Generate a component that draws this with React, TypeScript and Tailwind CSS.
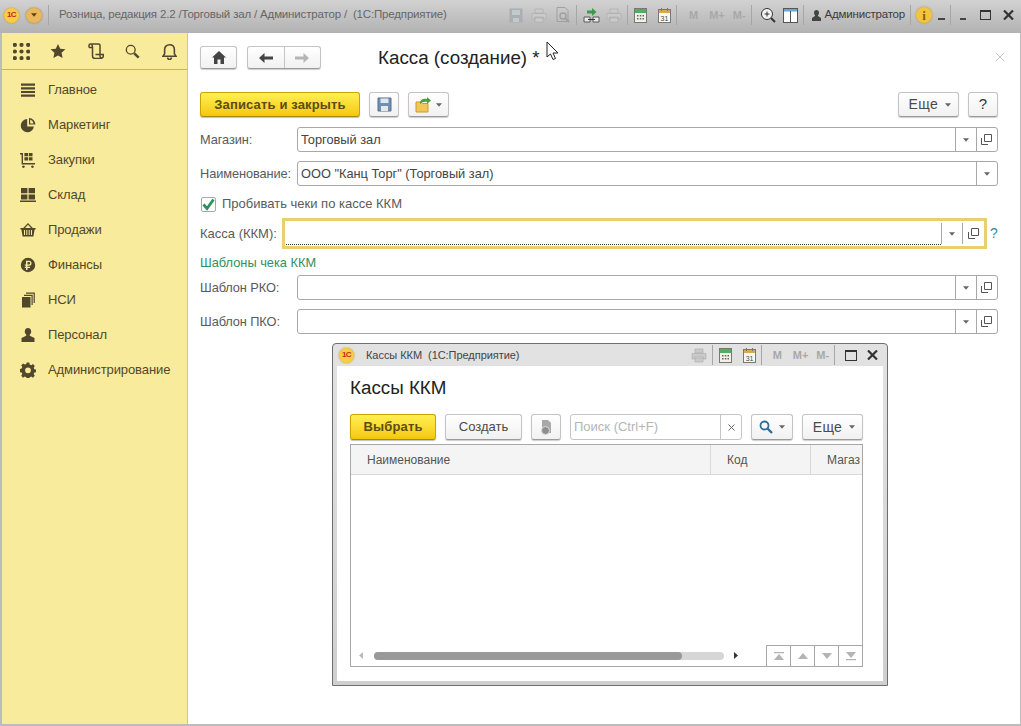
import React from 'react';

const menu = ['Главное', 'Маркетинг', 'Закупки', 'Склад', 'Продажи', 'Финансы', 'НСИ', 'Персонал', 'Администрирование'];

const Caret = ({ className = 'fill-[#666]' }: { className?: string }) => (
  <svg width="6" height="4" viewBox="0 0 7 4" className={className}>
    <path d="M0 0h7L3.5 4z" />
  </svg>
);

const Logo = () => (
  <span className="flex h-[15px] w-[15px] shrink-0 items-center justify-center rounded-full bg-[#f7cd45] shadow-[0_0_2px_#c98a20]">
    <span className="text-[8px] font-bold leading-none tracking-[-0.5px] text-[#c8281c]">1С</span>
  </span>
);

const MenuIcon = ({ i }: { i: number }) => {
  const c = 'fill-[#51482c]';
  return (
    <svg width="16" height="16" viewBox="0 0 16 16" className={c}>
      {i === 0 && <path d="M1 1.5h14v2.2H1zM1 5.2h14v2.2H1zM1 8.9h14v2.2H1zM1 12.6h14v2.2H1z" />}
      {i === 1 && <path d="M7.2 2a6.6 6.6 0 1 0 6.7 7.4H7.2zM9 1v6.6h6.4A6.6 6.6 0 0 0 9 1zm1.2 1.6a5 5 0 0 1 3.4 3.8h-3.4z" fillRule="evenodd" />}
      {i === 2 && <path d="M0 1h3v10h12v1.6H1.6V2.6H0zM4.4 1H8v3.3H4.4zm4.4 0h3.7v3.3H8.800zm-4.400 4.200H8v3.300H4.400zm4.400 0h3.700v3.300H8.800zM3.400 13.400a1.300 1.300 0 1 0 .1 0zm9 0a1.300 1.300 0 1 0 .1 0z" />}
      {i === 3 && <path d="M1 1h6.400v5.300H1zm7.600 0H15v5.300H8.600zM1 7.400h6.400v5H1zm7.600 0H15v5H8.600zM0 13.600h16V15H0z" />}
      {i === 4 && <path d="M8 1 3.200 6H.4v1.600h1L2.600 14.500h10.800l1.200-6.900h1V6h-2.800zm0 1.800L10.900 6H5.100zM4 8h1v5H4zm2.300 0h1v5h-1zm2.400 0h1v5h-1zM11 8h1v5h-1z" fillRule="evenodd" />}
      {i === 5 && <path d="M8 .8a7.200 7.200 0 1 0 0 14.400A7.200 7.200 0 0 0 8 .8zM6 3.800h3a2.500 2.500 0 0 1 0 5H7.500v1H10v1.300H7.500V13H6v-1.900H4.800V9.800H6v-1H4.800V7.400H6zm1.500 1.300v2.300H9a1.150 1.150 0 0 0 0-2.300z" fillRule="evenodd" />}
      {i === 6 && <path d="M2 5h8.500v10.500H2zM4 2.800h8.700V13h-1.200V4H4zM6 .6h8.800V11h-1.200V1.800H6z" />}
      {i === 7 && <path d="M8 1c-2 0-3.200 1.400-3.200 3.400 0 1.300.5 2.500 1.400 3.200v1.200L1.500 11v4h13v-4L9.800 8.800V7.600c.9-.7 1.400-1.900 1.400-3.200C11.200 2.400 10 1 8 1z" />}
      {i === 8 && <path d="M6.700.6h2.600l.4 2 1.500.6 1.700-1.100 1.900 1.900-1.100 1.700.6 1.500 2 .4v2.600l-2 .4-.6 1.500 1.100 1.700-1.900 1.900-1.700-1.100-1.500.6-.4 2H6.700l-.4-2-1.500-.6-1.700 1.100-1.900-1.900 1.100-1.700-.6-1.500-2-.4V7l2-.4.6-1.500-1.100-1.700 1.900-1.900 1.700 1.100 1.500-.6zM8 5.400a2.900 2.900 0 1 0 0 5.800 2.900 2.900 0 0 0 0-5.800z" fillRule="evenodd" />}
    </svg>
  );
};

const TopIcons = () => (
  <div className="flex h-[37px] items-center border-b border-[#c9b458] pl-[11px] text-[#51482c]">
    <svg width="17" height="17" viewBox="0 0 18 18" className="fill-[#51482c]">
      {[2, 9, 16].map((y) => [2, 9, 16].map((x) => <circle key={`${x}-${y}`} cx={x} cy={y} r="2.200" />))}
    </svg>
    <svg width="16" height="16" viewBox="0 0 18 18" className="ml-[20px] fill-[#51482c]">
      <path d="m9 1 2.500 5.400 5.900.7-4.400 4 1.200 5.800L9 14l-5.200 2.900L5 11.100l-4.400-4 5.900-.7z" />
    </svg>
    <svg width="16" height="16" viewBox="0 0 16 16" fill="none" className="ml-[22px] stroke-[#51482c] stroke-[1.500]">
      <path d="M1 4.500v-2A1.500 1.500 0 0 1 2.500 1h8A1.500 1.500 0 0 1 12 2.500V13c0 1.300 1 2.200 2 2 1-.2 1.300-1 1.300-2v-1.500H7.500" />
      <path d="M1 4.500h3.500M3.500 1.200c.8.800 1 1.800 1 3.300V13c0 1.500 1 2.500 2.500 2.500h7" />
    </svg>
    <svg width="15" height="15" viewBox="0 0 17 17" fill="none" className="ml-[21px] stroke-[#51482c]">
      <circle cx="6.500" cy="6.500" r="5" strokeWidth="1.500" />
      <path d="m10.500 10.500 5 5" strokeWidth="2.800" />
    </svg>
    <svg width="15" height="17" viewBox="0 0 16 18" fill="none" className="ml-[22px] stroke-[#51482c] stroke-[1.700]">
      <path d="M1 14h14l-1.800-2.500V7c0-3-2-5.200-5.200-5.200S2.800 4 2.800 7v4.500z" />
      <path d="M6 15.500a2 2 0 0 0 4 0" />
    </svg>
  </div>
);

const Sidebar = () => (
  <aside className="flex w-[186px] shrink-0 flex-col border-r border-[#d4c67c] bg-[#f9eb9c]">
    <TopIcons />
    <nav className="flex flex-col pt-[2px]">
      {menu.map((name, i) => (
        <div key={name} className="flex h-[35px] items-center pl-[18px] text-[13px] tracking-[-0.1px] text-[#51482c]">
          <MenuIcon i={i} />
          <span className="ml-[12px]">{name}</span>
        </div>
      ))}
    </nav>
  </aside>
);

const Sep = () => <span className="mx-[5px] h-[20px] w-px bg-[#a6a6a6]" />;

const Calc = ({ className = '' }: { className?: string }) => (
  <svg width="13" height="15" viewBox="0 0 13 15" className={className}>
    <rect x=".5" y=".5" width="12" height="14" fill="#f1f1e8" stroke="#777" />
    <rect x="1" y="1" width="11" height="4" fill="#4fae62" />
    <path d="M3 7h1.500v1.500H3zm2.800 0h1.500v1.500H5.800zm2.700 0H10v1.500H8.500zM3 10h1.500v1.500H3zm2.800 0h1.500v1.500H5.800zm2.700 0H10v1.500H8.500z" fill="#666" />
  </svg>
);

const Cal = ({ className = '' }: { className?: string }) => (
  <svg width="13" height="15" viewBox="0 0 13 15" className={className}>
    <rect x=".5" y="1.500" width="12" height="13" fill="#fafaf2" stroke="#777" />
    <rect x="1" y="2" width="11" height="3" fill="#d9a850" />
    <path d="M3 0h1v3H3zm6 0h1v3H9z" fill="#777" />
    <text x="6.500" y="12.500" textAnchor="middle" fontSize="7" fill="#444">31</text>
  </svg>
);

const Mem = ({ className = '' }: { className?: string }) => (
  <div className={`flex items-center text-[11px] font-bold text-[#a8a8a8] ${className}`}>
    <span>M</span>
    <span className="ml-[11px]">M+</span>
    <span className="ml-[8px]">M-</span>
  </div>
);

const PrintIcon = ({ className = '' }: { className?: string }) => (
  <svg width="16" height="15" viewBox="0 0 16 15" className={className}>
    <path d="M4 1h8v4H4zM1 5.500h14V11h-2.500V9h-9v2H1zM4 10h8v4H4z" fill="#cacaca" stroke="#aaa" strokeWidth=".6" />
  </svg>
);

const TitleBar = () => (
  <header className="flex h-[33px] shrink-0 items-center bg-gradient-to-b from-[#d2d2d2] to-[#b2b2b2] pb-[3px] pl-[4px] text-[12px]">
    <Logo />
    <span className="ml-[7px] flex h-[15px] w-[16px] items-center justify-center rounded-full bg-[#e9b75c] shadow-[0_0_2px_#9a7128]">
      <Caret className="fill-[#5b4310]" />
    </span>
    <span className="ml-[6px] h-[20px] w-px bg-[#a6a6a6]" />
    <span className="ml-[10px] w-[450px] whitespace-nowrap text-[11.500px] tracking-[-0.17px] text-[#666]">Розница, редакция 2.2 /Торговый зал / Администратор /&nbsp; (1С:Предприятие)</span>
    <div className="flex items-center">
      <svg width="14" height="15" viewBox="0 0 14 15"><path d="M.5.5h13v14H.5z" fill="#a9afb4" /><path d="M3 2h8v5H3zM4 10h6v4H4z" fill="#c4c9cc" /></svg>
      <PrintIcon className="ml-[8px]" />
      <svg width="15" height="16" viewBox="0 0 15 16" fill="none" className="ml-[9px] stroke-[#a0a0a0]"><path d="M1 .5h8l3 3v11H1z" /><circle cx="7" cy="9" r="3" strokeWidth="1.500" /><path d="m9 11 4 4" strokeWidth="2" /></svg>
      <Sep />
      <svg width="17" height="16" viewBox="0 0 17 16" className="ml-px"><path d="M4 3.500h5V1l4.500 4L9 9V6.500H4z" fill="#3f9a48" /><path d="M1 10h6v5H1zm9 0h6v5h-6z" fill="#e8e8e0" stroke="#5a5a5a" /><path d="M5 12.500h7" stroke="#333" /></svg>
      <PrintIcon className="ml-[6px]" />
      <Sep />
      <Calc className="ml-px" />
      <Cal className="ml-[11px]" />
      <Sep />
      <Mem className="ml-[7px]" />
      <Sep />
      <svg width="16" height="16" viewBox="0 0 16 16" fill="none" className="ml-[3px] stroke-[#333]"><circle cx="7" cy="7" r="5.500" fill="#f4f4f4" /><path d="M4.500 7h5M7 4.500v5" /><path d="m11 11 4 4" strokeWidth="2" /></svg>
      <svg width="15" height="15" viewBox="0 0 15 15" className="ml-[7px]"><rect x=".5" y=".5" width="14" height="14" fill="#fff" stroke="#555" /><rect x="1" y="1" width="13" height="2.500" fill="#67a9d8" /><path d="M7.500 3v11" stroke="#555" /></svg>
      <Sep />
      <svg width="9" height="11" viewBox="0 0 9 11" className="ml-[3px] fill-[#444]"><path d="M4.500 0C3 0 2 1.100 2 2.700c0 1 .4 1.900 1 2.400v1L0 8v3h9V8L6 6.100v-1c.6-.5 1-1.400 1-2.400C7 1.100 6 0 4.500 0z" /></svg>
      <span className="ml-[4px] whitespace-nowrap text-[11.500px] tracking-[-0.2px] text-[#3a3a3a]">Администратор</span>
    </div>
    <span className="ml-[5px] h-[20px] w-px bg-[#a6a6a6]" />
    <span className="ml-[5px] flex h-[16px] w-[16px] items-center justify-center rounded-full bg-[#f1c53e] font-['Liberation_Serif',serif] text-[13px] font-bold leading-none text-[#8a5a10] shadow-[0_0_2px_#b78a2a]">i</span>
    <span className="ml-[6px] mt-[8px] h-[2px] w-[7px] bg-[#444]" />
    <span className="ml-[5px] h-[20px] w-px bg-[#a6a6a6]" />
    <span className="ml-[9px] mt-[8px] h-[2px] w-[6px] bg-[#444]" />
    <span className="ml-[14px] h-[10px] w-[11px] border border-t-2 border-[#333]" />
    <svg width="11" height="10" viewBox="0 0 11 10" className="ml-[12px] stroke-[#333] stroke-[2.200]"><path d="m1 .5 9 9m0-9-9 9" /></svg>
  </header>
);

const Btn = ({ children, className = '' }: { children?: React.ReactNode; className?: string }) => (
  <button className={`flex items-center justify-center rounded-[3px] border border-[#c4c4c4] border-b-[#9a9a9a] bg-gradient-to-b from-white to-[#f1f1f1] text-[13px] text-[#4a4a4a] shadow-[0_1px_1px_rgba(0,0,0,0.2)] ${className}`}>
    {children}
  </button>
);

const YellowBtn = ({ children, className = '' }: { children: React.ReactNode; className?: string }) => (
  <button className={`flex items-center justify-center rounded-[3px] border border-[#c9a400] border-b-[#a88a10] bg-gradient-to-b from-[#fff04f] to-[#f5c800] text-[13px] font-bold tracking-[0.15px] text-[#5b4d14] shadow-[0_1px_1px_rgba(0,0,0,0.25)] ${className}`}>
    {children}
  </button>
);

const MoreBtn = ({ className = '' }: { className?: string }) => (
  <Btn className={`h-[25px] w-[61px] gap-[7px] pl-[3px] text-[14px] tracking-[0.3px] ${className}`}>Еще <Caret /></Btn>
);

const OpenIcon = () => (
  <svg width="11" height="11" viewBox="0 0 11 11" fill="none" className="stroke-[#555]">
    <path d="M3.500.5h7v7h-7z" />
    <path d="M.5 4v6.500H7" />
  </svg>
);

const FieldEnd = ({ open = true, h = 'h-full' }: { open?: boolean; h?: string }) => (
  <>
    <span className={`flex w-[21px] shrink-0 items-center justify-center border-l border-[#a8a8a8] ${h}`}>
      <Caret className="fill-[#666]" />
    </span>
    {open && (
      <span className={`flex w-[21px] shrink-0 items-center justify-center border-l border-[#a8a8a8] ${h}`}>
        <OpenIcon />
      </span>
    )}
  </>
);

const Field = ({ label, value, open = true }: { label: string; value?: string; open?: boolean }) => (
  <div className="flex h-[25px] items-center text-[12.800px] text-[#5a5a5a]">
    <span className="w-[97px] shrink-0 whitespace-nowrap tracking-[-0.1px]">{label}</span>
    <div className="flex h-full flex-1 items-center rounded-[3px] border border-[#a8a8a8] bg-white">
      <span className="flex-1 pl-[3px] text-[#444]">{value}</span>
      <FieldEnd open={open} />
    </div>
  </div>
);

const FormArea = () => (
  <main className="flex flex-1 flex-col bg-white pl-[12px] pr-[22px] pt-[13px]">
    <div className="flex h-[23px] items-center">
      <Btn className="h-[23px] w-[37px]">
        <svg width="14" height="13" viewBox="0 0 14 13" className="fill-[#444]"><path d="M7 0 0 6.500h2V13h3.500V8.500h3V13H12V6.500h2z" /></svg>
      </Btn>
      <div className="ml-[10px] flex h-[23px] w-[74px] rounded-[3px] border border-[#c4c4c4] border-b-[#9a9a9a] bg-gradient-to-b from-white to-[#f1f1f1] shadow-[0_1px_1px_rgba(0,0,0,0.2)]">
        <span className="flex flex-1 items-center justify-center border-r border-[#c4c4c4]">
          <svg width="14" height="10" viewBox="0 0 14 10" className="fill-[#444]"><path d="M5.500 0v3.500H14v3H5.500V10L0 5z" /></svg>
        </span>
        <span className="flex flex-1 items-center justify-center">
          <svg width="14" height="10" viewBox="0 0 14 10" className="fill-[#b5b5b5]"><path d="M8.500 0v3.500H0v3h8.500V10L14 5z" /></svg>
        </span>
      </div>
      <h1 className="ml-[57px] mt-[2px] whitespace-nowrap text-[18.800px] text-[#222]">Касса (создание) *</h1>
      <svg width="12" height="12" viewBox="0 0 12 12" className="ml-auto mr-[-8px] mt-[-2px] stroke-[#c4c4c4]"><path d="m2 2 8 8m0-8-8 8" /></svg>
    </div>

    <div className="mt-[23px] flex h-[25px] items-center">
      <YellowBtn className="h-[25px] w-[160px]">Записать и закрыть</YellowBtn>
      <Btn className="ml-[9px] h-[25px] w-[30px]">
        <svg width="15" height="15" viewBox="0 0 15 15"><path d="M1 1h13v13H1z" fill="#6f8fb5" stroke="#566f8e" /><path d="M3.500 1.500h8V6h-8z" fill="#dfe8f2" /><path d="M4 9h7v5H4z" fill="#e8e8e8" /></svg>
      </Btn>
      <Btn className="ml-[9px] h-[25px] w-[41px] gap-[4px]">
        <svg width="17" height="16" viewBox="0 0 17 16"><path d="M1 5h5l1.500 1.500H13V15H1z" fill="#f2c75a" stroke="#c99b2d" /><path d="M5 5c1-3 4-4 7-3V0l4 3.500L12 7V4.800C9 4.300 7 5 5 7z" fill="#4f9d3f" /></svg>
        <Caret />
      </Btn>
      <MoreBtn className="ml-auto" />
      <Btn className="ml-[9px] h-[25px] w-[30px] text-[15px] text-[#333]">?</Btn>
    </div>

    <div className="mt-[10px]"><Field label="Магазин:" value="Торговый зал" /></div>
    <div className="mt-[9px]"><Field label="Наименование:" value={'ООО "Канц Торг" (Торговый зал)'} open={false} /></div>

    <label className="mt-[9px] flex h-[18px] items-center pl-[1px] text-[13px] text-[#5a5a5a]">
      <span className="flex h-[15px] w-[15px] items-center justify-center rounded-[2px] border border-[#a8a8a8] bg-white">
        <svg width="14" height="13" viewBox="0 0 13 12" fill="none" className="stroke-[#2f8f5c] stroke-[2.700]"><path d="m1.500 6 3.500 4 6.500-9" /></svg>
      </span>
      <span className="ml-[6px]">Пробивать чеки по кассе ККМ</span>
    </label>

    <div className="mt-[5px] flex h-[31px] items-center text-[13px] text-[#5a5a5a]">
      <span className="w-[82px] shrink-0 whitespace-nowrap">Касса (ККМ):</span>
      <div className="flex h-full w-[705px] items-center border-[3px] border-[#e9d06c] bg-white pl-[1px]">
        <span className="mt-[2px] h-[20px] flex-1 border-b border-dotted border-[#333]" />
        <FieldEnd h="h-[21px]" />
        <span className="w-px" />
      </div>
      <span className="ml-[3px] text-[14px] text-[#3a87a8]">?</span>
    </div>

    <div className="mt-[6px] flex h-[16px] items-center text-[12.800px] text-[#2f9160]">Шаблоны чека ККМ</div>
    <div className="mt-[4px]"><Field label="Шаблон РКО:" /></div>
    <div className="mt-[9px]"><Field label="Шаблон ПКО:" /></div>
  </main>
);

const navIcons = [
  { d: 'M1 1h10v1.300H1zM6 3l5 6H1z', cls: 'w-[24px] border-r border-[#a8a8a8]' },
  { d: 'M6 2l5 6H1z', cls: 'w-[24px] border-r border-[#a8a8a8]' },
  { d: 'M1 2h10L6 8z', cls: 'w-[24px] border-r border-[#a8a8a8]' },
  { d: 'M1 1h10L6 7zM1 8h10v1.300H1z', cls: 'w-[23px]' },
];

const TableFooter = () => (
  <div className="flex h-[21px] items-center">
    <svg width="4" height="7" viewBox="0 0 4 7" className="ml-[8px] fill-[#bbb]"><path d="M4 0v7L0 3.500z" /></svg>
    <div className="ml-[11px] h-[8px] w-[350px] rounded-full bg-[#d6d6d6]">
      <div className="h-full w-[308px] rounded-full bg-[#999]" />
    </div>
    <svg width="4" height="7" viewBox="0 0 4 7" className="ml-[10px] fill-[#333]"><path d="M0 0v7l4-3.500z" /></svg>
    <div className="ml-auto flex h-full border-l border-t border-[#a8a8a8]">
      {navIcons.map((n) => (
        <span key={n.d} className={`flex items-center justify-center ${n.cls}`}>
          <svg width="12" height="10" viewBox="0 0 12 10" className="fill-[#b4b4b4]"><path d={n.d} /></svg>
        </span>
      ))}
    </div>
  </div>
);

const ChoiceWindow = () => (
  <section className="absolute left-[332px] top-[343px] flex h-[343px] w-[556px] flex-col rounded-t-[4px] border border-[#6e6e6e] bg-gradient-to-b from-[#e2e2e2] to-[#cfcfcf]">
    <div className="flex h-[22px] shrink-0 items-center pl-[6px] text-[11px] tracking-[-0.05px] text-[#444]">
      <Logo />
      <span className="ml-[12px] whitespace-nowrap">Кассы ККМ&nbsp; (1С:Предприятие)</span>
      <PrintIcon className="ml-auto" />
      <Sep />
      <Calc className="ml-px" />
      <Cal className="ml-[11px]" />
      <Sep />
      <Mem className="ml-[6px]" />
      <Sep />
      <span className="ml-[5px] h-[11px] w-[12px] border border-t-2 border-[#333]" />
      <svg width="11" height="10" viewBox="0 0 11 10" className="ml-[10px] mr-[9px] stroke-[#333] stroke-[2.200]"><path d="m1 .5 9 9m0-9-9 9" /></svg>
    </div>
    <div className="mx-[4px] mb-[4px] flex flex-1 flex-col bg-white pl-[13px] pr-[20px] pt-[10px]">
      <h2 className="h-[24px] text-[18.800px] leading-[24px] text-[#222]">Кассы ККМ</h2>
      <div className="mt-[14px] flex h-[26px] items-center">
        <YellowBtn className="h-[26px] w-[86px]">Выбрать</YellowBtn>
        <Btn className="ml-[9px] h-[26px] w-[77px] text-[12.500px]">Создать</Btn>
        <Btn className="ml-[9px] h-[26px] w-[30px]">
          <svg width="13" height="16" viewBox="0 0 13 16"><path d="M2 1h6l3 3v10H2z" fill="#a9a9a9" /><circle cx="5.500" cy="11.500" r="4" fill="#8e8e8e" stroke="#ddd" /></svg>
        </Btn>
        <div className="ml-[9px] flex h-[26px] w-[172px] items-center rounded-[3px] border border-[#c4c4c4] text-[13px] text-[#b5b5b5]">
          <span className="flex-1 pl-[3px]">Поиск (Ctrl+F)</span>
          <span className="flex h-full w-[21px] items-center justify-center border-l border-[#c4c4c4]">
            <svg width="7" height="7" viewBox="0 0 7 7" className="stroke-[#666]"><path d="m.5.5 6 6m0-6-6 6" /></svg>
          </span>
        </div>
        <Btn className="ml-[9px] h-[26px] w-[42px] gap-[6px]">
          <svg width="14" height="14" viewBox="0 0 14 14" fill="none" className="stroke-[#2f6f96]"><circle cx="5.500" cy="5.500" r="4" strokeWidth="1.800" /><path d="m8.500 8.500 4.500 4.500" strokeWidth="2.400" /></svg>
          <Caret />
        </Btn>
        <MoreBtn className="ml-[9px] h-[26px]" />
      </div>
      <div className="mt-[4px] flex h-[223px] flex-col border border-[#a8a8a8]">
        <div className="flex h-[30px] shrink-0 border-b border-[#d8d8d8] bg-[#f4f4f4] text-[12px] text-[#555]">
          <span className="flex w-[359px] shrink-0 items-center pl-[16px]">Наименование</span>
          <span className="flex w-[100px] shrink-0 items-center border-l border-[#d8d8d8] pl-[16px]">Код</span>
          <span className="flex flex-1 items-center whitespace-nowrap border-l border-[#d8d8d8] pl-[16px]">Магаз</span>
        </div>
        <div className="flex-1" />
        <TableFooter />
      </div>
    </div>
  </section>
);

const App = () => (
  <div className="relative flex h-[726px] w-[1021px] flex-col overflow-hidden bg-[#bcbcbc] font-['Liberation_Sans',Arial,sans-serif]">
    <TitleBar />
    <div className="flex flex-1 pb-[2px] pl-[2px] pr-[2px]">
      <Sidebar />
      <FormArea />
    </div>
    <ChoiceWindow />
    <svg width="13" height="20" viewBox="0 0 13 20" className="absolute left-[546px] top-[41px]">
      <path d="M1 1v15l3.500-3 2.500 5.500 2.500-1L7 12h5z" fill="#fff" stroke="#222" />
    </svg>
  </div>
);

export default App;
